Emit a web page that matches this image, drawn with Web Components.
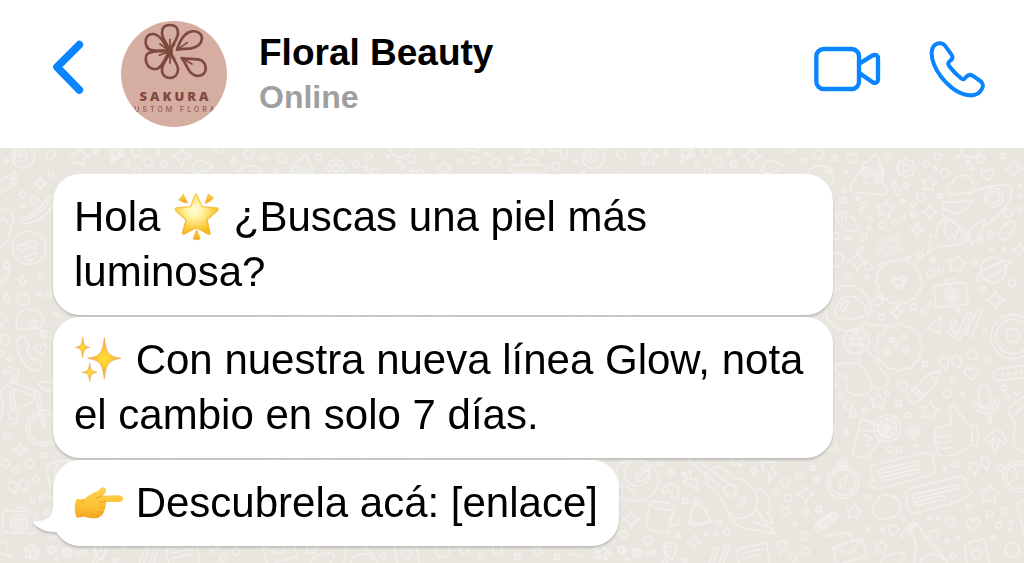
<!DOCTYPE html>
<html lang="es">
<head>
<meta charset="utf-8">
<meta name="viewport" content="width=device-width, initial-scale=1">
<title>Floral Beauty</title>
<style>
  body { margin: 0; font-family: "Liberation Sans", Arial, sans-serif; color: #000; background: #e8e6df; }
</style>
</head>
<body>
<chat-app>
  <chat-header slot="header" name="Floral Beauty" status="Online"></chat-header>
  <chat-bubble>Hola <chat-emoji name="star"></chat-emoji> ¿Buscas una piel más <wbr>luminosa?</chat-bubble>
  <chat-bubble><chat-emoji name="sparkles"></chat-emoji> Con nuestra nueva línea Glow, nota el cambio en solo 7 días.</chat-bubble>
  <chat-bubble tail><chat-emoji name="point"></chat-emoji> Descubrela acá: [enlace]</chat-bubble>
</chat-app>

<script>
function mount(el, html) {
  const t = document.createElement('template');
  t.innerHTML = html;
  el.attachShadow({ mode: 'open' }).append(t.content.cloneNode(true));
}

/* ---------- doodle wallpaper ---------- */
const P = d => `<path d="${d}"/>`;
const circles = list => list.map(([x, y, r]) => `<circle cx="${x}" cy="${y}" r="${r}"/>`).join('');
const star = (x, y, r) => {
  let d = '';
  for (let i = 0; i < 10; i++) {
    const a = i * Math.PI / 5 - 1.45, q = i % 2 ? r * 0.52 : r;
    d += (i ? 'L' : 'M') + (x + q * Math.cos(a)).toFixed(1) + ' ' + (y + q * Math.sin(a)).toFixed(1);
  }
  return P(d + 'Z');
};
const sparkle = (x, y, r) => {
  const k = r * 0.22;
  return P(`M${x} ${y - r}Q${x + k / 2} ${y - k} ${x + r} ${y}Q${x + k} ${y + k / 2} ${x} ${y + r}Q${x - k / 2} ${y + k} ${x - r} ${y}Q${x - k} ${y - k / 2} ${x} ${y - r}Z`);
};
const scallop = (x, y, r, n, amp) => {
  let d = '';
  for (let i = 0; i <= 96; i++) {
    const a = i * Math.PI / 48, q = r + amp * Math.cos(n * a);
    d += (i ? 'L' : 'M') + (x + q * Math.cos(a)).toFixed(1) + ' ' + (y + q * Math.sin(a)).toFixed(1);
  }
  return P(d + 'Z');
};
const heart = (x, y, s) => `<path transform="rotate(-8 ${x} ${y})" d="M${x} ${y + s * 0.8}C${x - s * 1.6} ${y - s * 0.2} ${x - s * 0.7} ${y - s * 1.3} ${x} ${y - s * 0.4}C${x + s * 0.7} ${y - s * 1.3} ${x + s * 1.6} ${y - s * 0.2} ${x} ${y + s * 0.8}Z"/>`;
const pill = (x, y, w, h, rot) => `<rect x="${x - w / 2}" y="${y - h / 2}" width="${w}" height="${h}" rx="${Math.min(w, h) / 2}" transform="rotate(${rot} ${x} ${y})"/>`;
const quote = (x, y) => P(`M${x + 6} ${y + 22}Q${x + 22} ${y - 5} ${x + 8} ${y - 16}A14 14 0 1 0 ${x - 2} ${y + 10}Q${x + 8} ${y + 8} ${x + 6} ${y + 22}Z`);
const group = (x, y, body) => `<g transform="translate(${x} ${y}) scale(.33333)">${body}</g>`;

const doodles =
  group(254, 140,
    circles([[84,54,14],[31,54,8],[193,52,9],[343,50,10],[306,72,9],[362,98,12],[335,85,6],[433,68,6],[446,83,5],[402,50,5],[472,57,11],[536,47,7],[67,95,5],[211,133,7],[246,136,8],[222,155,9],[290,171,12],[236,185,6],[267,193,7],[268,222,7],[61,152,6],[57,182,9],[103,174,6],[119,195,8],[110,211,5],[138,237,6],[215,247,8],[238,232,5],[175,256,10],[349,168,7],[36,288,10],[72,296,6],[120,291,10],[136,262,3],[112,327,6],[288,346,9],[254,353,6],[132,380,11],[171,373,6],[130,410,5],[73,411,8],[320,400,11],[350,389,8],[327,361,7],[162,483,13],[269,500,8],[173,532,8],[298,517,8],[315,491,5],[387,547,8],[404,511,5],[476,445,7],[565,429,10],[483,574,6],[453,369,6],[502,285,9],[470,302,7],[502,326,5],[540,327,4],[552,220,13],[588,168,6],[590,208,6],[587,139,5]]) +
    sparkle(570,85,27) + sparkle(317,216,23) + sparkle(279,268,20) + sparkle(100,364,30) + sparkle(514,481,30) + sparkle(219,518,21) + sparkle(585,327,20) +
    star(316,132,24) + star(183,208,27) + star(398,373,29) +
    P('M97 112Q70 138 82 150Q84 156 92 157L182 165Q200 145 172 128Q190 95 165 72Q172 55 150 43Q145 60 125 68Q110 75 115 88Q98 100 97 112M118 124Q140 140 158 128') +
    '<ellipse cx="127" cy="97" rx="13" ry="15"/><ellipse cx="162" cy="105" rx="13" ry="17"/>' + circles([[127,99,5],[163,106,6]]) +
    scallop(246,84,25,8,4) + circles([[246,84,10]]) +
    P('M375 155Q365 135 385 130Q392 102 420 106Q445 112 452 138Q455 155 435 158L378 166Z') + heart(490,104,21) +
    P('M430 162Q500 132 555 135Q572 150 555 185Q530 225 485 255M355 188L446 182Q440 200 395 222L355 204ZM370 235Q400 240 422 300M310 340Q322 305 318 285L336 290Q338 245 362 238Q410 245 435 295Q390 325 352 318Q330 325 310 340M366 240Q355 270 370 300L385 285L395 298L400 270M482 235Q482 280 440 315L435 268ZM362 205Q350 230 370 236') +
    circles([[510,173,28],[510,173,18]]) +
    P('M40 222Q30 240 58 262Q90 282 103 268Q100 235 72 225Q50 205 40 222M48 218L55 240M62 222L68 245') + pill(548,272,62,30,-52) + P('M545 250L562 262M555 240L570 252') +
    scallop(225,425,67,16,4) + heart(224,428,25) + heart(224,426,16) +
    circles([[508,390,38]]) + '<ellipse cx="508" cy="391" rx="58" ry="13" transform="rotate(-28 508 391)"/>' +
    '<rect x="332" y="432" width="98" height="66" rx="9" transform="rotate(-6 381 465)"/>' + circles([[382,466,22],[382,466,13],[382,466,5]]) + P('M360 430L366 420L392 418L400 428') +
    circles([[72,505,68],[97,603,38],[97,603,10],[97,580,6],[117,595,6],[80,592,6],[82,615,6],[112,617,6]]) + P('M32 520Q40 465 90 470Q120 485 130 520Q95 545 60 535Q38 535 32 520') + pill(62,497,34,14,-60) + P('M132 552Q160 560 190 556M0 350Q50 325 60 355Q50 385 28 380M0 95Q30 90 28 125Q20 140 10 138') +
    scallop(225,622,68,12,4) + circles([[205,600,7],[240,590,6],[190,635,8],[245,630,8],[220,615,5]]) +
    P('M305 565L352 530L345 580L325 568ZM368 574L378 564L400 582L432 515L444 520L408 600ZM425 582L462 505L474 510L442 592Z') +
    circles([[567,590,66],[567,590,52],[567,586,20],[440,18,34]])) +
  group(254, 350,
    circles([[303,42,8],[445,14,14],[489,30,6],[386,93,6],[370,131,12],[417,131,5],[236,108,15],[189,130,6],[52,138,7],[73,168,12],[87,192,9],[121,179,7],[224,160,9],[253,196,8],[67,246,7],[197,298,10],[225,300,8],[268,245,17],[268,245,7],[540,115,8],[551,139,6],[578,130,6],[530,355,10],[393,344,9],[363,356,5],[435,470,7],[497,492,9],[542,484,10],[525,526,9],[562,515,6],[557,541,5],[378,516,14],[330,555,13],[316,504,6],[209,540,14],[131,442,7],[131,536,5],[177,537,5],[239,507,5],[368,573,6],[400,563,6],[508,563,6],[387,617,8],[342,502,3],[35,104,4]]) +
    star(163,155,25) + star(318,182,28) + star(497,433,32) + star(90,487,25) + star(172,592,23) +
    P('M32 45Q110 25 126 68Q155 100 135 128Q100 145 72 125Q60 100 70 80Q35 80 32 45M100 0Q110 20 105 42M130 0Q165 35 178 68Q205 90 185 112Q160 122 138 102') +
    P('M250 135L315 70L347 65L338 98L275 160Q255 165 250 135M262 120L292 146M270 112L300 138M315 70L338 98') +
    quote(358,40) + quote(396,35) + quote(448,355) + quote(482,340) + heart(443,70,23) + heart(448,523,23) +
    pill(575,68,135,36,-7) + circles([[535,73,3],[553,71,3],[573,69,3],[592,67,3]]) +
    pill(482,138,34,68,-5) + P('M448 160Q455 193 490 190Q525 183 524 148L513 150Q512 175 488 178Q462 178 458 155ZM486 192L498 220L504 216L498 190') +
    P('M112 205L192 238L130 325Q100 325 85 308ZM103 242L190 242M268 262L276 288M266 290L286 286M0 215Q40 220 32 240L0 255M10 300L38 300L34 278') + circles([[190,235,40],[190,235,28],[138,265,5],[125,255,3],[130,285,4]]) + P('M190 209V261M164 235H216M172 217L208 253M208 217L172 253') +
    P('M333 252Q330 230 360 228L380 222Q385 195 376 175Q390 150 402 185Q425 210 432 226L455 228Q470 260 455 288L440 285Q400 322 350 318Q335 305 340 292Q328 275 336 265Q330 260 333 252M335 257Q360 265 382 255M336 275Q360 282 380 272M342 294Q365 300 382 290M440 228Q450 255 440 285') +
    P('M517 238L485 266L495 278L512 262L503 302L515 306L525 266L540 285L548 276L530 240Z') +
    P('M150 345L300 308Q325 305 328 325L333 362Q332 372 310 378L165 417L135 408L148 390L140 360Q140 348 150 345') + pill(222,352,125,12,-13) + pill(228,375,115,12,-13) +
    P('M262 415L400 380Q420 375 425 395L428 412L445 427L426 440Q420 450 400 455L275 490Q255 490 250 465L245 435Q245 420 262 415') + pill(335,425,140,12,-13) + pill(318,452,90,12,-13) +
    circles([[56,397,48],[56,397,38],[56,342,14],[56,342,6],[583,380,46],[583,380,36],[565,600,22],[457,612,14]]) + P('M46 415L50 390L68 375L64 403ZM575 355L580 385L562 392') +
    P('M155 500Q132 475 158 455Q168 430 200 437Q232 445 230 475Q225 505 185 505Q165 512 155 500') +
    P('M25 592L115 565L130 618L40 645ZM25 592L80 612L115 565M0 560L75 546L84 572') + pill(12,512,66,22,-38) +
    P('M255 540Q265 515 285 530Q302 560 320 580Q350 600 358 628M258 545Q280 570 275 600L270 639M228 558L268 515L280 520L240 562ZM420 585L480 565L497 639M420 585L430 639M430 580L450 568M600 450Q575 455 580 468L600 550M600 140Q545 170 555 195Q570 200 575 235Q555 290 600 305M570 195Q585 180 600 165') +
    '<ellipse cx="205" cy="630" rx="38" ry="18" transform="rotate(-20 205 630)"/><ellipse cx="330" cy="640" rx="40" ry="28"/>') +
  group(30, 430,
    circles([[179,101,7],[213,127,8],[256,213,8],[72,313,11],[144,332,12],[62,360,9],[109,368,13],[142,373,7],[80,388,5],[236,316,6],[255,392,6],[316,310,5],[359,277,7],[347,311,6],[381,305,9],[461,123,8],[555,157,13],[598,135,10],[638,114,7],[650,150,7],[528,186,7],[565,204,10],[555,245,12],[585,283,6],[619,245,8],[656,238,8],[610,318,12],[618,364,11],[580,384,10],[205,357,9],[391,181,18],[290,213,7],[222,272,14],[112,130,38]]) +
    sparkle(93,268,26) + sparkle(283,335,22) + sparkle(616,193,27) + star(12,372,20) + star(412,88,24) +
    P('M60 100Q90 85 140 95Q180 120 175 160Q160 215 100 213Q60 210 45 190M60 165Q100 170 105 205') + pill(126,135,44,28,-45) + P('M112 150Q125 125 142 122') +
    P('M245 130L275 125L268 145L290 150L292 180L250 155L262 145ZM188 185Q195 160 215 162Q240 165 235 195Q230 210 212 205L218 190L205 180L195 195ZM485 95L528 95L515 120L528 125L505 158L508 130L488 120Z') +
    P('M150 220L138 292Q170 312 205 308L222 235') + '<ellipse cx="187" cy="227" rx="38" ry="11" transform="rotate(10 187 227)"/>' +
    P('M268 275Q278 222 290 220Q315 225 330 270Q300 288 268 275M262 280Q300 290 332 274') +
    P('M320 165Q308 120 345 112Q375 108 395 142Q440 145 470 190Q482 240 440 262Q400 275 380 240Q360 190 320 165M265 90L375 182M300 95L388 163') + pill(427,215,30,12,-52) +
    P('M470 175Q515 190 510 235L502 248Q512 260 520 282L495 272L500 285L470 240M388 262Q420 305 470 300L527 312Q515 290 490 286L455 275') +
    P('M210 388Q180 345 206 338Q235 345 228 365Q220 370 218 388ZM410 358L500 338L508 399M410 358L416 399M425 370L490 355M428 385L480 373M535 335L562 330L555 348L566 350L540 372L545 355L530 352Z') +
    pill(340,385,12,70,20) + pill(372,378,12,80,20) + pill(676,275,76,24,-38) + pill(676,275,54,9,-38)) +
  group(0, 140,
    circles([[70,52,33],[62,48,18],[60,46,6],[153,45,12],[107,24,4],[19,62,5],[153,101,8],[68,163,9],[101,181,12],[67,200,5],[122,410,8],[120,462,6],[146,465,8],[130,580,9],[70,478,18],[20,376,9],[287,35,6],[87,323,50]]) +
    star(238,52,28) + sparkle(121,130,20) + sparkle(6,540,24) + heart(66,323,15) + heart(99,314,15) +
    P('M340 25L335 48L352 48L332 68L375 42L358 40L372 22M0 125L42 95L48 102L28 120L50 112L50 122L32 130L48 132L0 160M65 235Q110 225 150 165M65 235Q60 255 90 248Q140 235 160 190M72 240Q120 230 156 172M72 350Q95 348 108 335Q110 358 90 362Q78 360 72 350M0 208Q42 205 40 238L30 275M0 240Q22 230 22 250M0 320Q30 310 25 280M65 405Q52 430 68 433Q86 430 65 405M20 455Q5 485 22 487Q38 480 20 455M50 565Q40 508 90 508Q135 515 130 550Q120 575 50 565M0 430Q30 415 28 385M170 495L200 520M160 520L185 530') + heart(98,552,14)) +
  group(0, 330,
    circles([[15,30,15],[5,70,7],[27,87,6],[131,12,8],[22,320,10],[131,375,7],[18,401,12],[47,421,8],[89,401,13],[107,448,10],[99,512,7],[124,506,7],[141,548,7],[156,660,11],[200,668,9],[130,295,53],[130,295,43],[40,255,14],[57,580,25],[57,580,15],[57,580,6]]) +
    heart(123,57,19) + sparkle(60,360,21) + quote(36,472) + quote(70,466) + star(93,665,25) +
    P('M52 30Q60 12 76 24L88 45Q76 55 86 75Q95 92 112 88L126 102Q124 126 100 122Q50 100 52 30M8 125Q25 100 55 122Q60 145 40 155L35 148Q48 138 42 130Q28 118 14 130ZM30 155L115 185M25 170L100 200M0 190L30 155M40 180L48 245L110 205M30 182L38 240M105 190L128 290L135 288L118 190M115 160Q130 150 165 160M115 160Q125 185 165 182M0 200Q18 230 0 270M28 285L50 275M140 420Q140 400 165 398M140 420L150 470') +
    '<rect x="8" y="543" width="98" height="66" rx="9" transform="rotate(3 57 576)"/>' + P('M48 542L52 532L76 534L80 543M0 640Q20 625 25 655M0 670L35 680')) +
  group(20, 450,
    circles([[97,300,10],[146,308,10],[190,308,6],[225,335,6]]) + P('M222 290Q215 310 240 328Q262 310 258 285')) +
  group(100, 144,
    circles([[110,24,14],[176,26,6],[145,54,13],[83,58,7],[191,59,9],[112,82,10],[400,50,7],[358,14,12],[446,31,14],[1080,52,7],[1125,48,11]]) +
    sparkle(245,38,30) + P('M30 20L72 12L52 32L70 34L32 55L42 36L28 34M275 80Q285 42 310 50L338 65Q325 85 285 88ZM412 85Q430 65 455 65Q485 72 488 88M1070 15L1130 22L1140 12')) +
  group(470, 144,
    circles([[14,48,10],[77,57,13],[54,30,6],[124,41,5],[171,20,7],[214,25,7],[259,67,12]]) +
    P('M235 15Q260 5 292 12L288 45L275 45L272 20L240 22ZM145 72Q155 40 180 42Q205 45 210 65') + pill(175,74,108,24,0)) +
  group(454, 540, circles([[30,30,12],[80,50,8],[130,28,14],[190,50,9],[250,34,12],[310,52,8]]));

customElements.define('chat-wallpaper', class extends HTMLElement {
  constructor() {
    super();
    mount(this, `
      <style>
        :host { display: block; overflow: hidden; background: #e8e6df; contain: size; }
        svg { display: block; width: 100%; height: 100%; }
        pattern g { fill: none; stroke: #f1efea; stroke-width: 5; stroke-linejoin: round; stroke-linecap: round; }
        text { fill: none; stroke: #f1efea; font: bold 25px "Liberation Sans", Arial, sans-serif; }
      </style>
      <svg aria-hidden="true">
        <defs><pattern id="doodles" patternUnits="userSpaceOnUse" width="570" height="430"><g transform="translate(0 -148)">${doodles}</g></pattern></defs>
        <rect width="100%" height="100%" fill="url(#doodles)"/>
        <text x="876" y="106" transform="rotate(-12 890 98)">42</text>
      </svg>`);
  }
});

/* ---------- emoji ---------- */
const spark4 = (x, y, w, h) => `<path d="M${x} ${y - h}C${x + w * 0.12} ${y - h * 0.25} ${x + w * 0.25} ${y - h * 0.1} ${x + w} ${y}C${x + w * 0.25} ${y + h * 0.1} ${x + w * 0.12} ${y + h * 0.25} ${x} ${y + h}C${x - w * 0.12} ${y + h * 0.25} ${x - w * 0.25} ${y + h * 0.1} ${x - w} ${y}C${x - w * 0.25} ${y - h * 0.1} ${x - w * 0.12} ${y - h * 0.25} ${x} ${y - h}Z" fill="url(#s)" stroke="#f2a348" stroke-width="2" stroke-linejoin="round"/>`;
const EMOJI = {
  star: ['Estrella brillante', '36 33 150 150', `
    <defs>
      <radialGradient id="g" cx=".45" cy=".4" r=".56"><stop offset="0" stop-color="#fffde0"/><stop offset=".35" stop-color="#fff3a0"/><stop offset="1" stop-color="#fbbc1a"/></radialGradient>
      <linearGradient id="e" x2="0" y2="1"><stop offset="0" stop-color="#f4cf55"/><stop offset="1" stop-color="#f5b029"/></linearGradient>
      <linearGradient id="r" x2="0" y2="1"><stop offset="0" stop-color="#fbd54a"/><stop offset="1" stop-color="#f0a41e"/></linearGradient>
    </defs>
    <g fill="url(#r)" stroke="#efb02c" stroke-width="2" stroke-linejoin="round">
      <path d="M70 43L83 69Q69 69 57 60Z"/><path d="M145 42L161 54Q151 66 135 71Z"/><path d="M110 148L121 177Q110 182 99 177Z"/>
    </g>
    <path d="M109 42L127 80L172 84Q177 87 172 92L141 119L150 160Q149 165 144 162L109 142L73 162Q68 164 68 158L78 119L47 92Q43 87 48 84L92 80L106 43Q108 40 109 42Z" fill="url(#g)" stroke="url(#e)" stroke-width="4" stroke-linejoin="round"/>`],
  sparkles: ['Destellos', '42 30 150 150', `
    <defs><radialGradient id="s"><stop offset="0" stop-color="#ffe22e"/><stop offset=".4" stop-color="#fcc93a"/><stop offset="1" stop-color="#f4a052"/></radialGradient></defs>
    ${spark4(133, 103, 50, 62)}${spark4(68, 70, 21, 31)}${spark4(89, 145, 22, 28)}`],
  point: ['Mano señalando a la derecha', '162 84 150 150', `
    <defs><linearGradient id="h" x2="0" y2="1"><stop offset="0" stop-color="#ffd050"/><stop offset=".6" stop-color="#fdc234"/><stop offset="1" stop-color="#f3a322"/></linearGradient></defs>
    <path d="M170 149Q180 151 193 151Q204 139 220 132Q236 126 245 116Q253 112 258 120Q260 130 247 140L297 139Q309 141 309 149Q309 158 297 159L258 159Q260 168 255 174Q257 183 250 189Q250 199 241 201Q237 209 224 208Q204 208 193 202Q184 206 170 206Q164 193 164 178Q164 160 170 149Z" fill="url(#h)"/>
    <path d="M228 148Q238 146 247 140M258 159L240 160M255 174Q248 177 240 175M250 189Q243 191 236 189M241 201Q235 202 230 200M193 151Q188 157 184 160M193 202L187 197" fill="none" stroke="#e09018" stroke-width="2" stroke-linecap="round"/>`]
};
customElements.define('chat-emoji', class extends HTMLElement {
  constructor() {
    super();
    const [label, box, art] = EMOJI[this.getAttribute('name')];
    mount(this, `
      <style>
        :host { display: inline-block; width: 50px; height: 50px; vertical-align: -10px; }
        svg { display: block; width: 100%; height: 100%; }
      </style>
      <svg role="img" aria-label="${label}" viewBox="${box}">${art}</svg>`);
  }
});

/* ---------- message bubble ---------- */
customElements.define('chat-bubble', class extends HTMLElement {
  constructor() {
    super();
    mount(this, `
      <style>
        :host { display: block; position: relative; box-sizing: border-box; max-width: min(780px, 100%);
          padding: 15px 21px 16px; border-radius: 27px; background: #fff;
          font-size: 42px; line-height: 55px; filter: drop-shadow(0 2px 1px rgba(0, 0, 0, .18)); }
        .tail { display: none; position: absolute; left: -21px; bottom: 12px; width: 40px; height: 32px; }
        :host([tail]) .tail { display: block; }
      </style>
      <svg class="tail" viewBox="36 162 120 96" aria-hidden="true"><path d="M99 160Q99 198 85 210Q68 221 36 221Q62 254 112 252Q135 250 140 200L140 160Z" fill="#fff"/></svg>
      <slot></slot>`);
  }
});

/* ---------- avatar ---------- */
customElements.define('brand-avatar', class extends HTMLElement {
  constructor() {
    super();
    mount(this, `
      <style>
        :host { display: flex; flex-direction: column; align-items: center; flex: none; width: 106px; height: 106px;
          border-radius: 50%; overflow: hidden; background: #d6ada1; color: #80493f; white-space: nowrap; }
        svg { display: block; flex: none; width: 106px; height: 66px; }
        .brand { font: 800 13px/18px "Open Sans", "Liberation Sans", sans-serif; letter-spacing: 3px; padding-left: 3px; }
        .line { font: 500 7px/9px Inter, "Liberation Sans", sans-serif; letter-spacing: 3px; padding-left: 3px; opacity: .8; }
      </style>
      <svg viewBox="273 33 318 198" aria-hidden="true" fill="none" stroke="#80493f" stroke-width="8" stroke-linecap="round" stroke-linejoin="round">
        <path d="M419 122C412 100 396 88 396 68C396 52 406 45 420 45C434 45 444 52 444 68C444 88 428 100 420 122Z"/>
        <path d="M416 122C402 96 388 72 368 72C352 72 346 86 347 98C348 116 360 122 376 122Z"/>
        <path d="M416 126C396 122 372 124 358 128C346 132 346 146 349 158C354 174 368 180 382 176C396 170 404 150 416 126Z"/>
        <path d="M420 126C412 148 396 160 396 180C396 196 408 204 420 204C434 204 444 194 444 178C444 160 428 148 420 126Z"/>
        <path d="M441 119C448 96 462 68 486 64C504 62 516 72 516 86C514 102 500 112 484 115C470 117 455 116 441 119Z"/>
        <path d="M455 144C475 150 500 142 516 152C530 164 530 182 520 192C508 202 492 198 482 188C470 174 466 156 455 144Z"/>
        <g stroke-width="5"><path d="M420 124V88M420 124L390 102M420 124L388 136M420 124L404 148M420 124V160M420 124L434 102M420 124L434 146M441 119L472 98M455 144L486 162"/></g>
        <circle cx="418" cy="124" r="7" fill="#80493f"/>
      </svg>
      <span class="brand">SAKURA</span>
      <span class="line">CUSTOM FLORAL</span>`);
  }
});

/* ---------- header ---------- */
customElements.define('chat-header', class extends HTMLElement {
  constructor() {
    super();
    mount(this, `
      <style>
        :host { display: block; background: #fff; }
        header { display: flex; align-items: flex-start; padding: 21px 39px 21px 52px; }
        button { display: grid; place-items: center; height: 96px; margin: 0; padding: 0; border: 0; background: none; color: #0a84ff; cursor: pointer; }
        svg { display: block; fill: none; stroke: currentColor; stroke-linecap: round; stroke-linejoin: round; }
        .back { margin-right: 37px; }
        .who { flex: 1; min-width: 0; margin-left: 32px; padding-top: 10px; }
        h1, p { margin: 0; font-weight: bold; line-height: 44px; }
        h1 { font-size: 37px; }
        p { font-size: 32px; color: #9f9f9f; }
        .actions { display: flex; gap: 48px; }
      </style>
      <header>
        <button class="back" type="button" aria-label="Volver"><svg width="32" height="59" viewBox="66 90 96 177" stroke-width="23"><path d="M148 104L81 171L148 240"/></svg></button>
        <brand-avatar></brand-avatar>
        <div class="who"><h1></h1><p></p></div>
        <div class="actions">
          <button type="button" aria-label="Videollamada"><svg width="67" height="46" viewBox="42 48 201 138" stroke-width="13"><rect x="49" y="57" width="128" height="120" rx="22"/><path d="M178 101L218 76Q234 71 234 86V148Q234 162 218 157L178 129"/></svg></button>
          <button type="button" aria-label="Llamar"><svg width="56" height="57" viewBox="388 32 168 171" stroke-width="12"><path d="M407 43C416 36 430 38 436 46L455 72C461 80 458 87 452 91C444 97 444 102 450 109C460 122 472 134 484 144C490 149 494 148 499 140C505 133 512 132 519 136L542 152C549 157 552 167 547 175C540 190 526 196 510 195C480 192 448 170 422 136C406 114 395 92 396 66C397 56 400 48 407 43Z"/></svg></button>
        </div>
      </header>`);
    this.shadowRoot.querySelector('h1').textContent = this.getAttribute('name');
    this.shadowRoot.querySelector('p').textContent = this.getAttribute('status');
  }
});

/* ---------- app shell ---------- */
customElements.define('chat-app', class extends HTMLElement {
  constructor() {
    super();
    mount(this, `
      <style>
        :host { display: grid; grid-template-rows: auto 1fr; min-height: 100vh; }
        main { display: grid; }
        chat-wallpaper, .messages { grid-area: 1 / 1; }
        .messages { display: flex; flex-direction: column; align-items: flex-start; gap: 2px; padding: 26px 53px 15px; }
      </style>
      <slot name="header"></slot>
      <main>
        <chat-wallpaper></chat-wallpaper>
        <div class="messages"><slot></slot></div>
      </main>`);
  }
});
</script>
</body>
</html>
